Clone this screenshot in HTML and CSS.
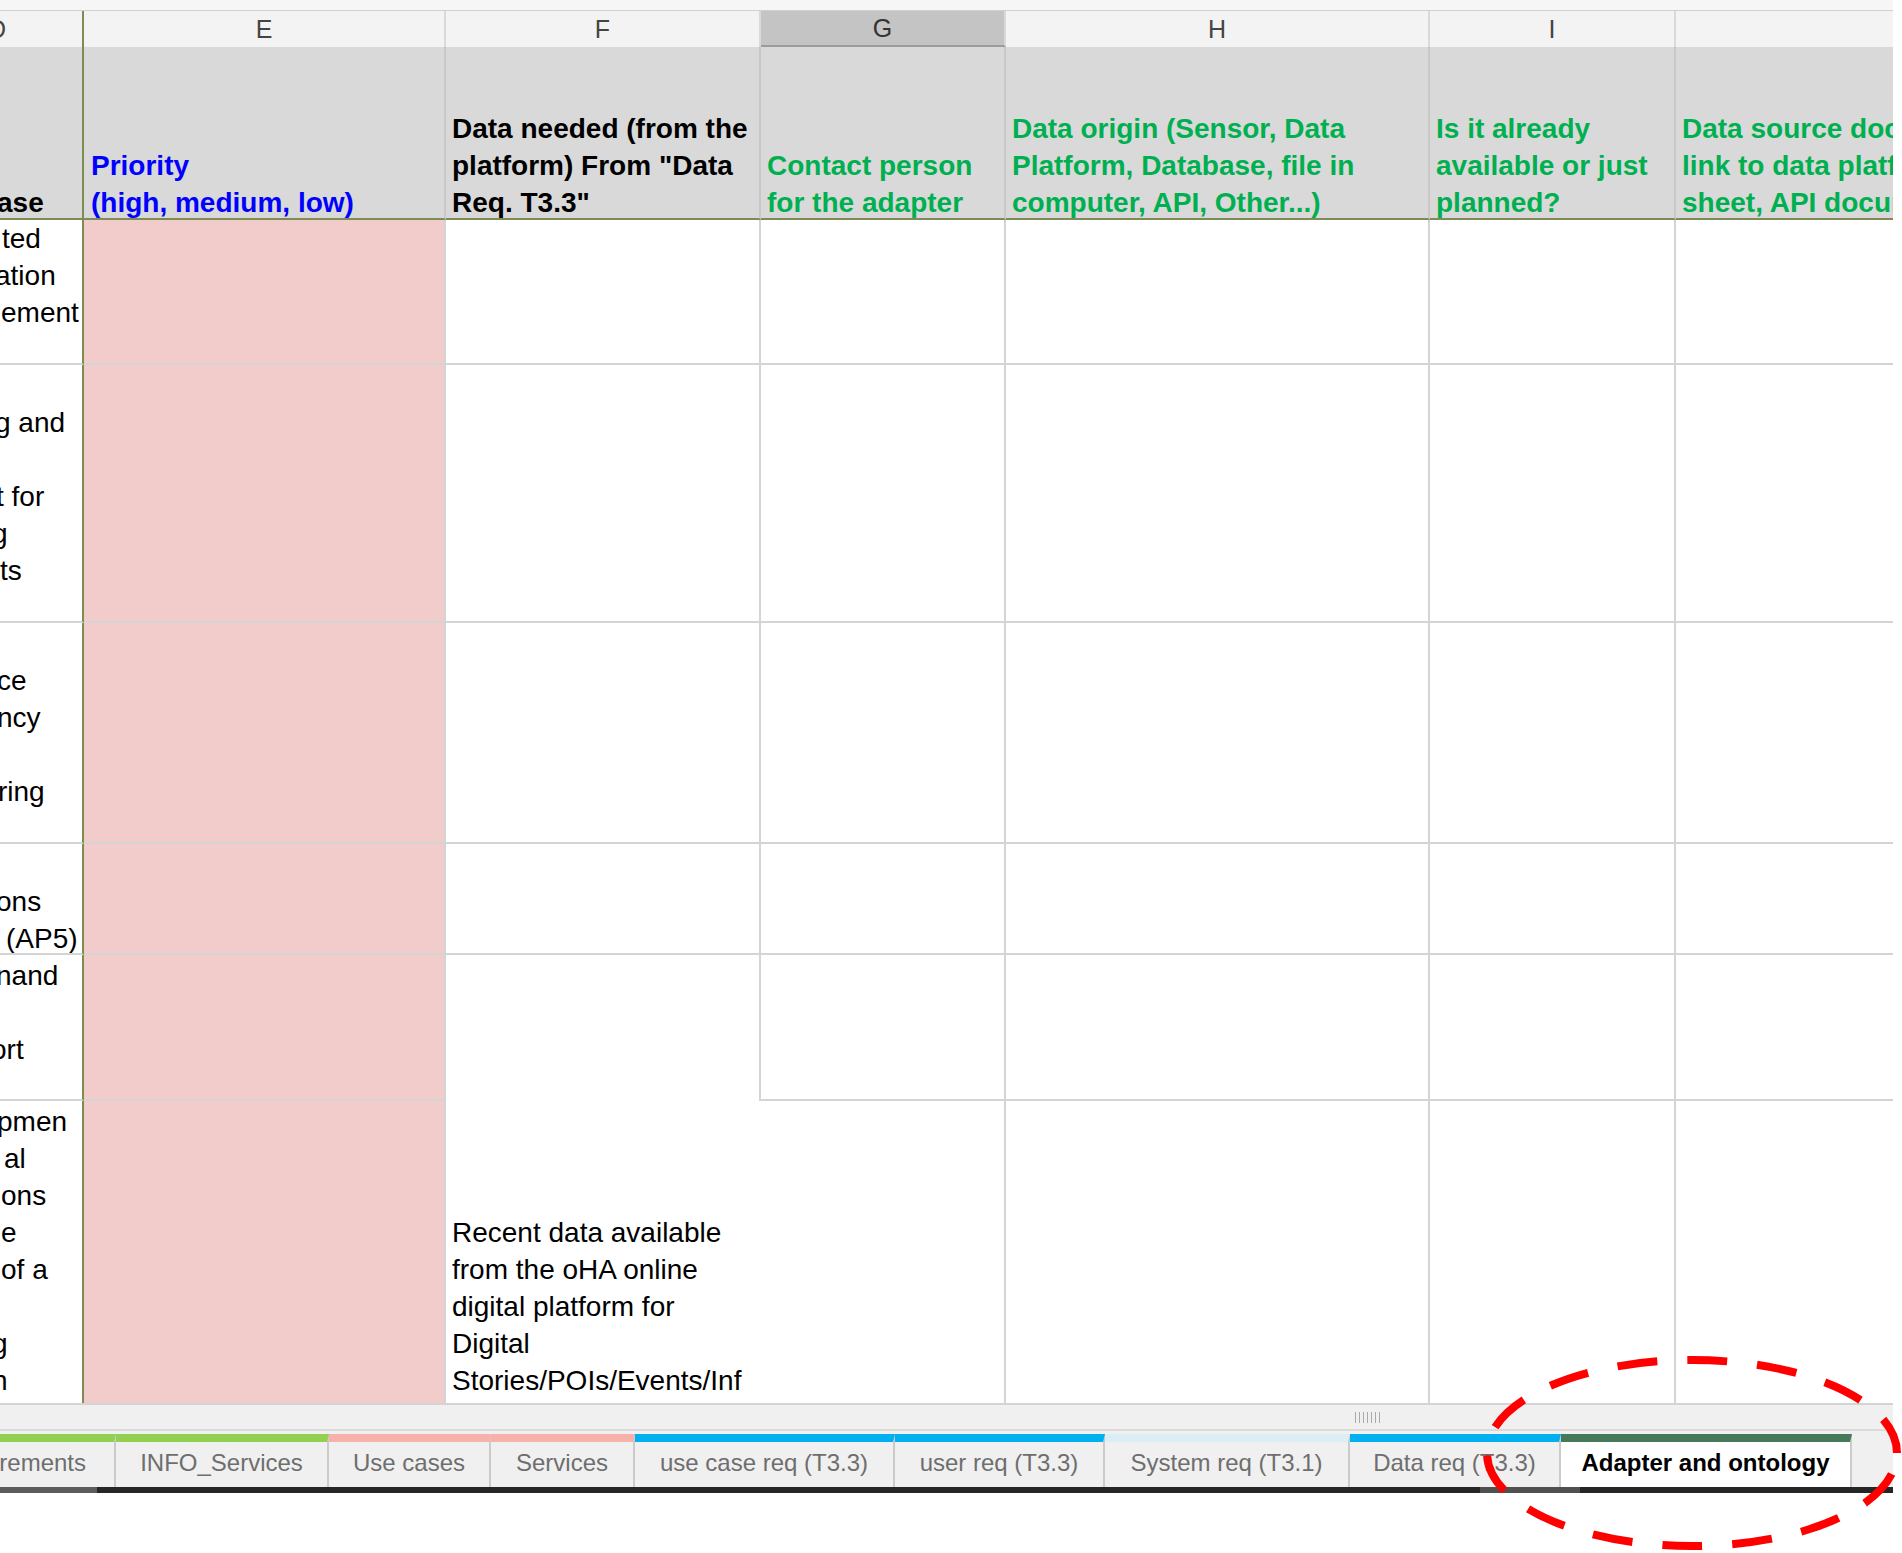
FILE: index.html
```html
<!DOCTYPE html>
<html>
<head>
<meta charset="utf-8">
<link rel="stylesheet" href="styles.css">
</head>
<body>
<div class="sheet">
  <div class="topband"></div>
  <div class="grid">
    <!-- column letters -->
    <div class="ch d"><span class="dl">D</span></div>
    <div class="ch">E</div>
    <div class="ch">F</div>
    <div class="ch sel">G</div>
    <div class="ch">H</div>
    <div class="ch">I</div>
    <div class="ch last"></div>

    <!-- header row -->
    <div class="hd d"><div class="m-3">ase</div></div>
    <div class="hd e blue"><div>Priority</div><div>(high, medium, low)</div></div>
    <div class="hd"><div>Data needed (from the</div><div>platform) From "Data</div><div>Req. T3.3"</div></div>
    <div class="hd green"><div>Contact person</div><div>for the adapter</div></div>
    <div class="hd green"><div>Data origin (Sensor, Data</div><div>Platform, Database, file in</div><div>computer, API, Other...)</div></div>
    <div class="hd green"><div>Is it already</div><div>available or just</div><div>planned?</div></div>
    <div class="hd green last"><div>Data source documentation</div><div>link to data platform,</div><div>sheet, API documentation</div></div>

    <!-- row 2 -->
    <div class="c d first"><div class="ln m2">ted</div><div class="ln m-5">ation</div><div class="ln m1">ement</div><div class="ln">&nbsp;</div></div>
    <div class="c e"></div>
    <div class="c"></div>
    <div class="c"></div>
    <div class="c"></div>
    <div class="c"></div>
    <div class="c last"></div>

    <!-- row 3 -->
    <div class="c d"><div class="ln">&nbsp;</div><div class="ln m-5">g and</div><div class="ln">&nbsp;</div><div class="ln m-4">t for</div><div class="ln m-8">g</div><div class="ln m0">ts</div><div class="ln">&nbsp;</div></div>
    <div class="c e"></div>
    <div class="c"></div>
    <div class="c"></div>
    <div class="c"></div>
    <div class="c"></div>
    <div class="c last"></div>

    <!-- row 4 -->
    <div class="c d"><div class="ln">&nbsp;</div><div class="ln m-3">ce</div><div class="ln m-3">ncy</div><div class="ln">&nbsp;</div><div class="ln m-2">ring</div><div class="ln">&nbsp;</div></div>
    <div class="c e"></div>
    <div class="c"></div>
    <div class="c"></div>
    <div class="c"></div>
    <div class="c"></div>
    <div class="c last"></div>

    <!-- row 5 -->
    <div class="c d"><div class="ln">&nbsp;</div><div class="ln m-4">ons</div><div class="ln m6">(AP5)</div></div>
    <div class="c e"></div>
    <div class="c"></div>
    <div class="c"></div>
    <div class="c"></div>
    <div class="c"></div>
    <div class="c last"></div>

    <!-- row 6 -->
    <div class="c d"><div class="ln m-4">nand</div><div class="ln">&nbsp;</div><div class="ln m-9">ort</div><div class="ln">&nbsp;</div></div>
    <div class="c e"></div>
    <div class="c nob"></div>
    <div class="c"></div>
    <div class="c"></div>
    <div class="c"></div>
    <div class="c last"></div>

    <!-- row 7 -->
    <div class="c d r7"><div class="ln m-3">pmen</div><div class="ln m4">al</div><div class="ln m1">ons</div><div class="ln m1">e</div><div class="ln m1">of a</div><div class="ln">&nbsp;</div><div class="ln m-8">g</div><div class="ln m-8">n</div></div>
    <div class="c e r7"></div>
    <div class="c r7 nor ftext"><div>Recent data available</div><div>from the oHA online</div><div>digital platform for</div><div>Digital</div><div>Stories/POIs/Events/Inf</div></div>
    <div class="c r7"></div>
    <div class="c r7"></div>
    <div class="c r7"></div>
    <div class="c r7 last"></div>
  </div>

  <div class="hscroll"><span class="grip"></span></div>

  <div class="tabs">
    <div class="tab t-first s-green">Requirements</div>
    <div class="tab t-info s-green">INFO_Services</div>
    <div class="tab t-use s-pink">Use cases</div>
    <div class="tab t-serv s-pink">Services</div>
    <div class="tab t-ucr s-blue">use case req (T3.3)</div>
    <div class="tab t-ur s-blue">user req (T3.3)</div>
    <div class="tab t-sys s-cyan">System req (T3.1)</div>
    <div class="tab t-data s-blue">Data req (T3.3)</div>
    <div class="tab t-adapt active">Adapter and ontology</div>
    <div class="tab-rest"></div>
  </div>
  <div class="tabfoot"></div>
  <div class="below"></div>
</div>

<svg class="annot" width="422" height="201" viewBox="0 0 422 201">
  <ellipse cx="212" cy="101" rx="205" ry="93" fill="none" stroke="#ff0000" stroke-width="8" stroke-dasharray="40 30" stroke-dashoffset="48"/>
</svg>
</body>
</html>
```

FILE: styles.css
```css
html, body {
  margin: 0;
  padding: 0;
  background: #ffffff;
}

body {
  font-family: "Liberation Sans", Arial, sans-serif;
  position: relative;
  min-height: 1553px;
}

.sheet {
  width: 1893px;
}

.topband {
  height: 10px;
  background: #f6f6f6;
  border-bottom: 1px solid #d0d0d0;
}

.grid {
  display: grid;
  grid-template-columns: 84px 362px 315px 245px 424px 246px 217px;
  grid-template-rows: 36px 173px 145px 258px 221px 111px 146px 302px;
}

.grid > div {
  box-sizing: border-box;
  overflow: hidden;
  min-width: 0;
}

/* column letter headers */
.ch {
  background: #f3f3f3;
  border-right: 2px solid #d9d9d9;
  display: flex;
  align-items: center;
  justify-content: center;
  font-size: 25px;
  color: #444444;
}
.ch.d {
  justify-content: flex-start;
  border-right-color: #7d8b55;
}
.ch .dl {
  margin-left: -12px;
}
.ch.sel {
  background: #c4c4c4;
  border-bottom: 2px solid #9c9c9c;
  color: #333;
}
.ch.last {
  border-right: none;
}

/* header row */
.hd {
  background: #d9d9d9;
  border-right: 2px solid #c8c8c8;
  border-bottom: 2px solid #7d8b55;
  display: flex;
  flex-direction: column;
  justify-content: flex-end;
  padding: 0 0 0 6px;
  font-weight: bold;
  font-size: 28px;
  line-height: 37px;
  white-space: nowrap;
  color: #000;
}
.hd > div:last-child {
  margin-bottom: -3px;
}
.hd.d {
  padding-left: 0;
  border-right-color: #7d8b55;
}
.hd.e {
  padding-left: 7px;
}
.hd.last {
  border-right: none;
}
.blue {
  color: #0000ff;
}
.green {
  color: #00b050;
}

/* body cells */
.c {
  border-right: 2px solid #d4d4d4;
  border-bottom: 2px solid #d4d4d4;
  font-size: 28px;
  line-height: 37px;
  color: #000;
  white-space: nowrap;
}
.c.d {
  border-right-color: #7d8b55;
  padding-top: 2px;
}
.c.d.first {
  padding-top: 0;
}
.c.e {
  background: #f2cbcb;
}
.c.last {
  border-right: none;
}
.c.r7 {
  border-bottom: none;
}
.c.nob {
  border-bottom: none;
}
.c.nor {
  border-right: none;
}

.ln {
  height: 37px;
}

.m-9 { margin-left: -9px; }
.m-8 { margin-left: -8px; }
.m-5 { margin-left: -5px; }
.m-4 { margin-left: -4px; }
.m-3 { margin-left: -3px; }
.m-2 { margin-left: -2px; }
.m0 { margin-left: 0; }
.m1 { margin-left: 1px; }
.m2 { margin-left: 2px; }
.m4 { margin-left: 4px; }
.m6 { margin-left: 6px; }

.ftext {
  display: flex;
  flex-direction: column;
  justify-content: flex-end;
  padding: 0 0 4px 6px;
}

/* horizontal scroll strip */
.hscroll {
  height: 28px;
  box-sizing: border-box;
  background: #f0f0f0;
  border-top: 2px solid #d4d4d4;
  border-bottom: 2px solid #dadada;
  display: flex;
  align-items: center;
  padding-left: 1355px;
}
.grip {
  width: 27px;
  height: 11px;
  background: repeating-linear-gradient(90deg, #a9a9a9 0 1px, transparent 1px 4px);
}

/* sheet tabs */
.tabs {
  display: flex;
  height: 56px;
  box-sizing: border-box;
  padding-top: 3px;
  background: #f0f0f0;
  overflow: hidden;
}
.tab {
  flex: none;
  box-sizing: border-box;
  height: 53px;
  border-top: 8px solid #92d050;
  border-right: 2px solid #cbcbcb;
  display: flex;
  align-items: center;
  justify-content: center;
  font-size: 24px;
  color: #6e6e6e;
  white-space: nowrap;
  padding-bottom: 3px;
}
.s-green { border-top-color: #92d050; }
.s-pink { border-top-color: #f6b1aa; }
.s-blue { border-top-color: #00b0f0; }
.s-cyan { border-top-color: #daeef3; }

.t-first {
  width: 116px;
  justify-content: flex-end;
  padding-right: 28px;
  overflow: hidden;
}
.t-info { width: 213px; }
.t-use { width: 162px; }
.t-serv { width: 144px; }
.t-ucr { width: 260px; }
.t-ur { width: 210px; }
.t-sys { width: 245px; }
.t-data { width: 211px; }
.t-adapt { width: 291px; }

.tab.active {
  background: #ffffff;
  color: #000000;
  font-weight: bold;
  border-top-color: #447a58;
}
.tab-rest {
  flex: 1;
}

.tabfoot {
  height: 6px;
  background: linear-gradient(90deg, #5c5c5c 0 97px, #262626 97px 1480px, #505050 1480px 1580px, #262626 1580px);
}

.below {
  height: 60px;
  background: #ffffff;
}

/* red annotation */
.annot {
  position: absolute;
  left: 1480px;
  top: 1352px;
  overflow: visible;
  z-index: 5;
}
```
